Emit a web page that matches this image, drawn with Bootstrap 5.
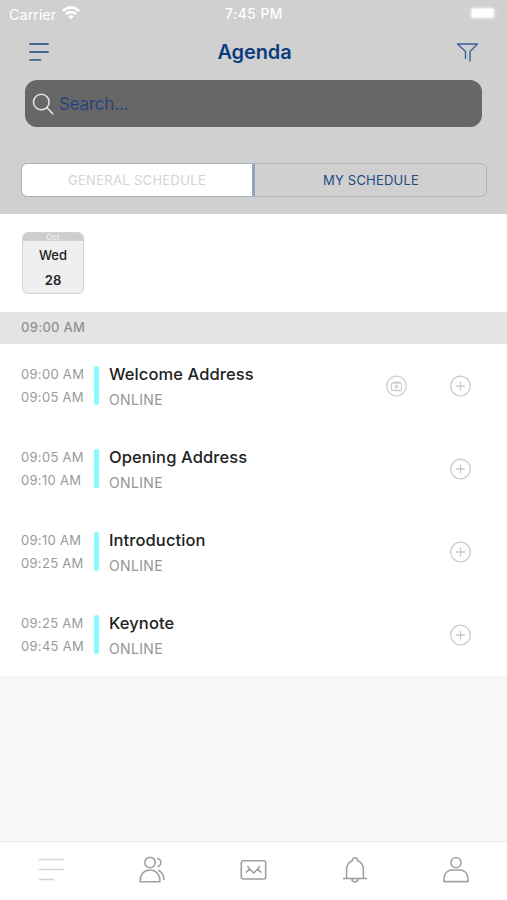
<!DOCTYPE html>
<html lang="en">
<head>
<meta charset="utf-8">
<meta name="viewport" content="width=device-width, initial-scale=1">
<title>Agenda</title>
<link href="https://cdn.jsdelivr.net/npm/bootstrap@5.3.0/dist/css/bootstrap.min.css" rel="stylesheet">
<style>
body{font-family:Inter,"Liberation Sans",sans-serif;background:#f7f7f7;color:#222;height:900px;overflow:hidden}
svg{display:block;fill:none;flex:none}
.app-head{background:#d0d0d0;height:214px}
.status{height:28px;padding:0 8px 2px 9px;color:#fff;font-size:14.5px;line-height:26px}
.carrier{letter-spacing:-.05px;margin-right:6px}
.clock{font-weight:500;font-size:13.8px;letter-spacing:.5px;padding-top:2px}
.title-bar{height:52px;padding:0 28px 5px 28px;color:#0c3c80}
.title-bar h1{font-size:20px;font-weight:600;letter-spacing:-.1px;line-height:24px;padding-left:4px}
.search{height:47px;margin:0 25px;border-radius:12px;background:#676767;color:#274478;font-size:17px;padding-left:7px}
.search span{letter-spacing:-.2px;margin-left:5px;padding-top:2px}
.segments{height:34px;margin:36px 20px 0 21px;border:1px solid #a6b4c4;border-radius:6px;font-size:13px;overflow:hidden}
.segments div{line-height:32px}
.seg-on{background:#fff;color:#d3d3d3;width:230px;letter-spacing:.32px;border-radius:5px 0 0 5px}
.seg-off{color:#234a84;border-left:3px solid #92a5bb;letter-spacing:.2px;padding-left:1px}
.dates{height:98px;padding:18px 22px}
.day{width:62px;height:62px;border:1.5px solid #d2d2d2;border-radius:6px;background:#efefef;font-size:13px;overflow:hidden}
.month{height:8px;background:#cdcdcd;color:#f4f4f4;font-size:8px;line-height:8px}
.wd{line-height:18px;margin-top:5px;font-weight:500}
.dn{line-height:18px;margin-top:7px;font-weight:600}
.band{height:32px;line-height:31px;padding-left:21px;background:#e4e4e4;color:#929292;font-size:13px;font-weight:500;letter-spacing:.3px}
.slot{height:83px;padding:0 36px 0 21px}
.times{width:73px;padding-top:19px;color:#9a9a9a;font-size:13px;line-height:22.5px;letter-spacing:.3px}
.stripe{width:5px;height:39px;margin-top:22px;border-radius:2px;background:#87fbff}
.info{padding:18px 0 0 10px}
.name{font-size:16.5px;line-height:24px;font-weight:500;letter-spacing:.1px}
.place{font-size:14px;line-height:24px;color:#959595;margin-top:2px;letter-spacing:.35px}
.acts{height:83px;gap:42px}
.tabs{height:59px;border-top:1px solid #e9e9e9;background:#fff;padding-bottom:2px}
</style>
</head>
<body class="d-flex flex-column">
<header class="app-head">
  <div class="status d-flex align-items-center">
    <div class="d-flex align-items-center" style="flex:1 1 0"><span class="carrier pt-1">Carrier</span>
      <svg width="18" height="14" viewBox="0 0 18 14" stroke="#fff" stroke-width="2.6"><path d="M1 4.9Q9-2 17 4.9M4 8.1Q9 4 14 8.1"/><path d="M6.2 10.3Q9 8 11.8 10.3L9 13.2Z" fill="#fff" stroke="none"/></svg></div>
    <span class="clock">7:45 PM</span>
    <div class="d-flex justify-content-end" style="flex:1 1 0">
      <svg width="30" height="14" viewBox="0 0 30 14"><rect x=".5" y=".5" width="26" height="13" rx="4" fill="#dfdfdf"/><rect x="2.5" y="2.5" width="22" height="9" rx="2" fill="#fff"/><path d="M28 4.5Q30 7 28 9.5Z" fill="#e4e4e4"/></svg></div>
  </div>
  <div class="title-bar d-flex align-items-center justify-content-between">
    <svg width="22" height="20" viewBox="0 0 22 20" stroke="#43658f" stroke-width="1.8" stroke-linecap="round"><path d="M2 2H20M2 10H20M2 17.8H12.5"/></svg>
    <h1 class="mb-0">Agenda</h1>
    <svg width="24" height="20" viewBox="0 0 24 20" stroke="#3b6296" stroke-width="1.4" stroke-linejoin="round" stroke-linecap="round"><path d="M10.5 16.5V9.5L2.5 2H22.5L15 9.5V19"/></svg>
  </div>
  <div class="search d-flex align-items-center">
    <svg width="22" height="22" viewBox="0 0 22 22" stroke="#e4e4e4" stroke-width="1.6" stroke-linecap="round"><circle cx="9.3" cy="9" r="7.8"/><path d="M15 14.8L20.7 20.8"/></svg>
    <span>Search...</span>
  </div>
  <div class="segments d-flex text-center">
    <div class="seg-on">GENERAL SCHEDULE</div>
    <div class="seg-off flex-fill">MY SCHEDULE</div>
  </div>
</header>
<main class="flex-grow-1">
  <div class="bg-white">
    <div class="dates"><div class="day text-center"><div class="month">Oct</div><div class="wd">Wed</div><div class="dn">28</div></div></div>
    <div class="band">09:00 AM</div>
    <div class="slot d-flex">
      <div class="times">09:00 AM<br>09:05 AM</div><div class="stripe"></div>
      <div class="info flex-grow-1"><div class="name">Welcome Address</div><div class="place">ONLINE</div></div>
      <div class="acts d-flex align-items-center">
        <svg width="22" height="22" viewBox="0 0 22 22" stroke="#cfcfcf" stroke-width="1.3"><circle cx="11.5" cy="11" r="9.8"/><rect x="6.5" y="8" width="10" height="7.5" rx="1.3"/><path d="M8.5 7.2H14.5"/><circle cx="11.5" cy="11.6" r="1.2"/></svg>
        <svg width="22" height="22" viewBox="0 0 22 22" stroke="#cbcbcb" stroke-width="1.3"><circle cx="11.5" cy="11" r="9.8"/><path d="M7 11H16M11.5 6.5V15.5"/></svg>
      </div>
    </div>
    <div class="slot d-flex">
      <div class="times">09:05 AM<br>09:10 AM</div><div class="stripe"></div>
      <div class="info flex-grow-1"><div class="name">Opening Address</div><div class="place">ONLINE</div></div>
      <div class="acts d-flex align-items-center">
        <svg width="22" height="22" viewBox="0 0 22 22" stroke="#cbcbcb" stroke-width="1.3"><circle cx="11.5" cy="11" r="9.8"/><path d="M7 11H16M11.5 6.5V15.5"/></svg>
      </div>
    </div>
    <div class="slot d-flex">
      <div class="times">09:10 AM<br>09:25 AM</div><div class="stripe"></div>
      <div class="info flex-grow-1"><div class="name">Introduction</div><div class="place">ONLINE</div></div>
      <div class="acts d-flex align-items-center">
        <svg width="22" height="22" viewBox="0 0 22 22" stroke="#cbcbcb" stroke-width="1.3"><circle cx="11.5" cy="11" r="9.8"/><path d="M7 11H16M11.5 6.5V15.5"/></svg>
      </div>
    </div>
    <div class="slot d-flex">
      <div class="times">09:25 AM<br>09:45 AM</div><div class="stripe"></div>
      <div class="info flex-grow-1"><div class="name">Keynote</div><div class="place">ONLINE</div></div>
      <div class="acts d-flex align-items-center">
        <svg width="22" height="22" viewBox="0 0 22 22" stroke="#cbcbcb" stroke-width="1.3"><circle cx="11.5" cy="11" r="9.8"/><path d="M7 11H16M11.5 6.5V15.5"/></svg>
      </div>
    </div>
  </div>
</main>
<nav class="tabs row g-0 row-cols-5" aria-label="Main">
  <div class="col d-flex justify-content-center align-items-center"><svg width="28" height="28" viewBox="0 0 28 28" stroke="#d3d3d3" stroke-width="1.6"><path d="M2 3.5H27M2 13.5H27M2 23.5H17"/></svg></div>
  <div class="col d-flex justify-content-center align-items-center"><svg width="28" height="28" viewBox="0 0 28 28" stroke="#a2a2a2" stroke-width="1.6" stroke-linejoin="round"><circle cx="12" cy="6.6" r="5.2"/><path d="M2.2 25.7V24C2.2 18 6.5 14 12 14S21.8 18 21.8 24V25.7Z"/><path d="M19.3 2.4C24 3.4 24 9.4 19.3 10.6M20.2 14.2C24 15.8 26 19 26 24"/></svg></div>
  <div class="col d-flex justify-content-center align-items-center"><svg width="28" height="28" viewBox="0 0 28 28" stroke="#a0a0a0" stroke-width="1.6" stroke-linejoin="round"><rect x="2.3" y="4.8" width="24.4" height="18.2" rx="2"/><path d="M6.8 16.6L10.5 13L14.7 17L18.7 13L22.2 16.6M8.5 10L10.5 13M20.7 10L18.7 13"/></svg></div>
  <div class="col d-flex justify-content-center align-items-center"><svg width="28" height="28" viewBox="0 0 28 28" stroke="#9d9d9d" stroke-width="1.5"><path d="M2 22.6H26M5.6 22V13.5C5.6 9 8 6 11.2 4.8C11.6 .8 16.4 .8 16.8 4.8C20 6 22.4 9 22.4 13.5V22M10.8 22.8C11.3 27 16.7 27 17.2 22.8"/></svg></div>
  <div class="col d-flex justify-content-center align-items-center"><svg width="28" height="28" viewBox="0 0 28 28" stroke="#a2a2a2" stroke-width="1.6" stroke-linejoin="round"><circle cx="14" cy="6.6" r="5.1"/><path d="M2 25.6V23C2 17 6 14 10 14H18C22 14 26 17 26 23V25.6Z"/></svg></div>
</nav>
<script src="https://cdn.jsdelivr.net/npm/bootstrap@5.3.0/dist/js/bootstrap.bundle.min.js"></script>
</body>
</html>
